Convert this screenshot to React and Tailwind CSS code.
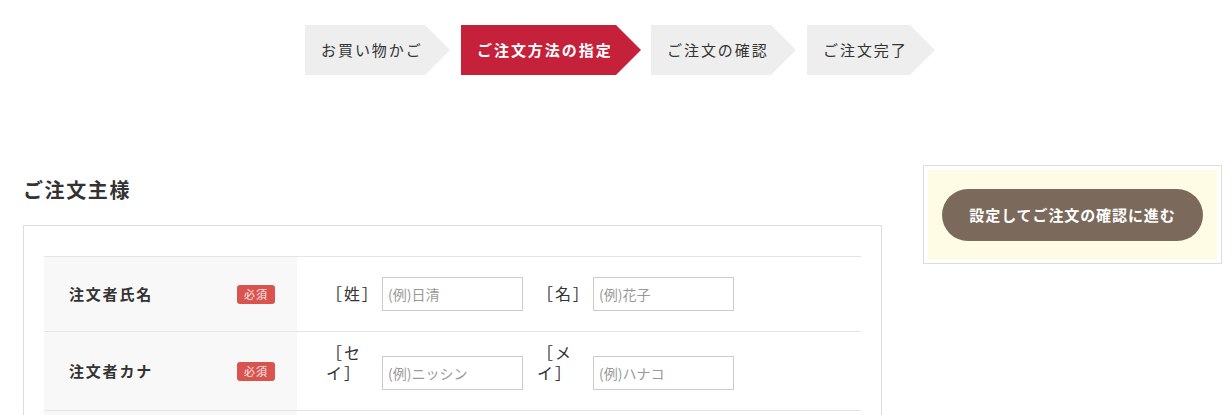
import React from 'react';

const steps = [
  { label: 'お買い物かご', w: 'w-[145px]', ml: '' },
  { label: 'ご注文方法の指定', w: 'w-[180px]', ml: 'ml-[11px]', active: true },
  { label: 'ご注文の確認', w: 'w-[145px]', ml: 'ml-[10px]' },
  { label: 'ご注文完了', w: 'w-[128px]', ml: 'ml-[11px]' },
];

const Badge = () => (
  <span className="inline-flex items-center justify-center w-[38px] h-[19px] rounded-[3px] bg-[#d9534f] text-[#fbeaea] text-[11px] tracking-[0.1em] leading-none">
    必須
  </span>
);

const Field = ({ label, placeholder, first }) => (
  <div className={`flex items-end ${first ? '' : 'ml-[14px]'}`}>
    <span className="w-[56px] text-left text-[16px] leading-[20px] tracking-[0.12em] text-[#333] mb-[8px]">{label}</span>
    <input
      type="text"
      placeholder={placeholder}
      className="w-[141px] h-[34px] border border-[#cccccc] bg-white px-[5px] text-[14px] text-[#333] placeholder:text-[#999] outline-none"
    />
  </div>
);

const Row = ({ title, children, tall }) => (
  <div className="flex border-t border-[#e5e5e5]">
    <div className="w-[253px] shrink-0 bg-[#f8f8f8] flex items-center justify-between pl-[25px] pr-[22px]">
      <span className="text-[15px] font-bold tracking-[0.12em] text-[#333]">{title}</span>
      <Badge />
    </div>
    <div className={`flex-1 flex items-end pl-[29px] pb-5 ${tall ? 'pt-[10px]' : 'pt-5'}`}>
      {children}
    </div>
  </div>
);

export default function App() {
  return (
    <div className="w-full h-[415px] bg-white text-[#333] font-['Noto_Sans_CJK_JP','Noto_Sans',sans-serif] overflow-hidden">
      {/* Steps */}
      <div className="pt-[25px] flex justify-center pl-[8px]">
        {steps.map((s) => (
          <div
            key={s.label}
            className={`${s.w} ${s.ml} h-[50px] flex items-center pl-4 text-[15px] tracking-[0.13em] [clip-path:polygon(0_0,calc(100%_-_25px)_0,100%_50%,calc(100%_-_25px)_100%,0_100%)] ${
              s.active ? 'bg-[#c6213a] text-white font-bold' : 'bg-[#eeeeee] text-[#333]'
            }`}
          >
            {s.label}
          </div>
        ))}
      </div>

      {/* Main */}
      <div className="mt-[90px] flex pl-[23px] gap-[41px]">
        <div className="w-[859px] shrink-0">
          <h2 className="mt-[10px] h-[30px] leading-[30px] text-[20px] font-bold tracking-[0.08em] text-[#333]">ご注文主様</h2>
          <div className="mt-[20px] border border-[#dddddd] px-[20px] pt-[30px] pb-[30px]">
            <Row title="注文者氏名">
              <Field first label="［姓］" placeholder="(例)日清" />
              <Field label="［名］" placeholder="(例)花子" />
            </Row>
            <Row title="注文者カナ" tall>
              <Field first label="［セイ］" placeholder="(例)ニッシン" />
              <Field label="［メイ］" placeholder="(例)ハナコ" />
            </Row>
            <div className="flex border-t border-[#e5e5e5] h-[75px]">
              <div className="w-[253px] shrink-0 bg-[#f8f8f8]" />
            </div>
          </div>
        </div>

        <div className="w-[299px] shrink-0">
          <div className="border border-[#dddddd] p-[4px]">
            <div className="bg-[#fffce6] pt-[19px] pb-[18px] px-[14px]">
              <button className="w-full h-[52px] rounded-full bg-[#7b6a5b] text-white text-[15px] font-bold tracking-[0.06em]">
                設定してご注文の確認に進む
              </button>
            </div>
          </div>
        </div>
      </div>
    </div>
  );
}
